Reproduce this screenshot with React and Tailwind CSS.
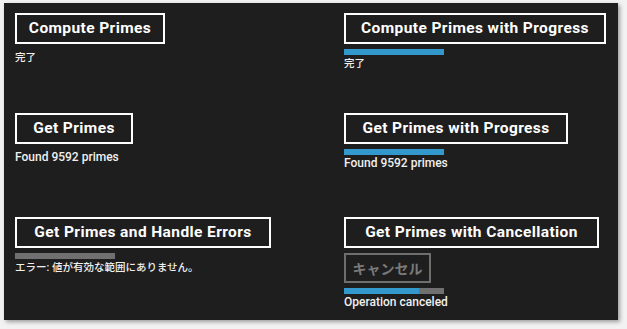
const FONT = { fontFamily: 'Roboto, "Noto Sans CJK JP", sans-serif' };

const ActionButton = ({ label, width }) => (
    <button
        type="button"
        className={`h-[31px] ${width} whitespace-nowrap border-2 border-white text-[15.5px] font-bold leading-none tracking-[0.4px] text-white`}
    >
        {label}
    </button>
);

const Bar = ({ value }) => (
    <div className="mt-[5px] h-[6px] w-[100px] bg-[#707070]">
        <div className="h-full bg-[#3399cc]" style={{ width: `${value}%` }} />
    </div>
);

const Status = ({ children, tight, jp }) => (
    <p
        className={`${tight ? "mt-[1px]" : "mt-[6px]"} ${jp ? "text-[10.5px]" : "text-[12px]"} whitespace-nowrap font-medium leading-[15px] text-[#f0f0f0]`}
    >
        {children}
    </p>
);

export default function App() {
    return (
        <div className="min-h-screen bg-[#f2f2f2] pl-[4px] pt-[3px]" style={FONT}>
            <div className="h-[317px] w-[614px] bg-[#1e1e1e] px-[11px] pt-[10px] shadow-[2px_2px_4px_rgba(0,0,0,0.35)]">
                <div className="grid grid-cols-[329px_1fr] grid-rows-[100px_104px_1fr]">
                    <div className="flex flex-col items-start">
                        <ActionButton label="Compute Primes" width="w-[150px]" />
                        <Status jp>完了</Status>
                    </div>
                    <div className="flex flex-col items-start">
                        <ActionButton label="Compute Primes with Progress" width="w-[262px]" />
                        <Bar value={100} />
                        <Status tight jp>完了</Status>
                    </div>

                    <div className="flex flex-col items-start">
                        <ActionButton label="Get Primes" width="w-[118px]" />
                        <Status>Found 9592 primes</Status>
                    </div>
                    <div className="flex flex-col items-start">
                        <ActionButton label="Get Primes with Progress" width="w-[224px]" />
                        <Bar value={100} />
                        <Status tight>Found 9592 primes</Status>
                    </div>

                    <div className="flex flex-col items-start">
                        <ActionButton label="Get Primes and Handle Errors" width="w-[256px]" />
                        <Bar value={0} />
                        <Status tight jp>エラー: 値が有効な範囲にありません。</Status>
                    </div>
                    <div className="flex flex-col items-start">
                        <ActionButton label="Get Primes with Cancellation" width="w-[255px]" />
                        <button
                            type="button"
                            disabled
                            className="mt-[5px] h-[30px] w-[87px] border-2 border-[#6e6e6e] text-[14px] font-bold leading-none text-[#7a7a7a]"
                            style={{ fontFamily: '"Noto Sans CJK JP", sans-serif' }}
                        >
                            キャンセル
                        </button>
                        <Bar value={75} />
                        <Status tight>Operation canceled</Status>
                    </div>
                </div>
            </div>
        </div>
    );
}
